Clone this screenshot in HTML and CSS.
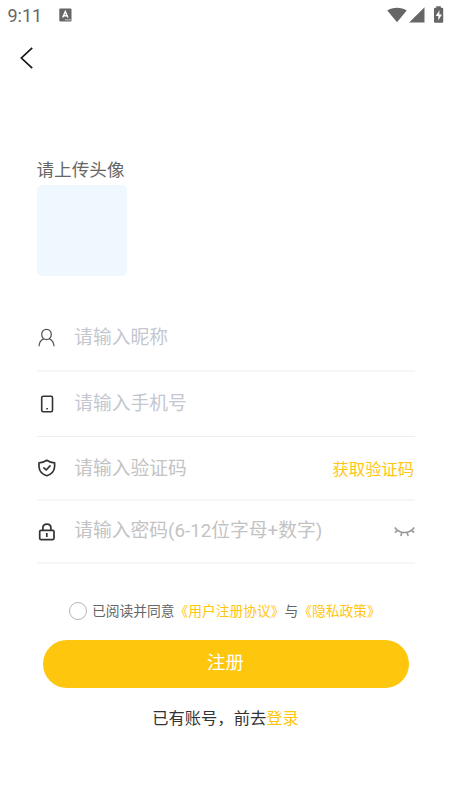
FILE: index.html
```html
<!DOCTYPE html>
<html lang="zh-CN">
<head>
<meta charset="utf-8">
<meta name="viewport" content="width=device-width, initial-scale=1">
<title>注册</title>
<link rel="stylesheet" href="styles.css">
</head>
<body>
<div class="status">
  <span class="time">9:11</span>
  <svg class="ime" width="13" height="14" viewBox="0 0 13 14"><rect x="0.3" y="0.5" width="12.2" height="13" rx="1" fill="#666"/><path d="M3.7 9.5 6.3 3.6 8.9 9.5M4.6 7.7H8" fill="none" stroke="#fff" stroke-width="1.4"/><path d="M6.3 11.8h1.2M8.3 11.8h1.2M10.3 11.8h1.2" stroke="#fff"/></svg>
  <svg class="signals" width="58" height="18" viewBox="0 0 58 18"><g fill="#666"><path d="M.3 4.6C5.5.8 14.500.8 19.700 4.600L10 16.200Z"/><path d="M37.500 1.300V16.500H22.200Z"/><path d="M49.300.3h4.500v1.500h1.400q1 0 1 1v13q0 1-1 1h-7.200q-1 0-1-1v-13q0-1 1-1h1.300z"/></g><path d="M52.500 4.200 48.700 10h2.600v4.500L54.900 8.500H52.300z" fill="#fff"/></svg>
</div>
<header class="nav">
  <svg width="14" height="22" viewBox="0 0 14 22"><path d="M12.200.9 1.400 11 12.200 21.100" fill="none" stroke="#161616" stroke-width="1.700"/></svg>
</header>
<main>
  <div class="upload-label">请上传头像</div>
  <div class="avatar"></div>
  <form class="form">
    <div class="row nickname">
      <svg class="icon" width="20" height="20" viewBox="0 0 20 20"><g fill="none" stroke="#555" stroke-width="1.250"><path d="M9.500 1.300C6.400 1.300 4.700 3.600 4.700 6.400S6.800 11.700 9.500 11.700 14.300 9.200 14.300 6.400 12.600 1.300 9.500 1.300Z"/><path d="M6.700 10.900C4 12 2.200 14.200 2 18.200M12.300 10.900C15 12 16.800 14.200 17 18.200"/></g></svg>
      <span class="hint">请输入昵称</span>
    </div>
    <div class="row phone">
      <svg class="icon" width="20" height="20" viewBox="0 0 20 20"><rect x="4.700" y="2.200" width="10.800" height="15.500" rx="1.500" fill="none" stroke="#333" stroke-width="1.600"/><path d="M9.300 14.700h1.600" stroke="#333" stroke-width="1.500"/></svg>
      <span class="hint">请输入手机号</span>
    </div>
    <div class="row code">
      <svg class="icon" width="20" height="20" viewBox="0 0 20 20"><g fill="none" stroke="#333" stroke-width="1.700" stroke-linejoin="round" stroke-linecap="round"><path d="M9.800 2.300C7.400 4 4.800 4.800 2 4.900V8.700C2.300 13.300 5.300 16.200 9.800 17.700 14.300 16.200 17.300 13.300 17.600 8.700V4.900C14.800 4.800 12.200 4 9.800 2.300Z"/><path d="M6.900 9.800 9.200 12 13 7.900"/></g></svg>
      <span class="hint grey">请输入验证码</span>
      <span class="get-code">获取验证码</span>
    </div>
    <div class="row password">
      <svg class="icon" width="20" height="20" viewBox="0 0 20 20"><g fill="none" stroke="#333" stroke-width="1.700"><rect x="2.700" y="8.300" width="14.300" height="9.300" rx="1.300"/><path d="M5.900 8.300V5.800C5.900 .8 13.900 .8 13.900 5.800V8.300M9.800 11v4"/></g></svg>
      <span class="hint grey">请输入密码(6-12位字母+数字)</span>
      <svg class="eye" width="21" height="12" viewBox="0 0 21 12"><path d="M.8 1.500C5.500 8.200 15.500 8.200 20.200 1.500M3.500 4.200.9 6.600M8 6.300 6.800 10M13 6.300 14.200 10M17.500 4.200 20.100 6.600" fill="none" stroke="#999" stroke-width="1.600"/></svg>
    </div>
  </form>
  <div class="agree"><span class="radio"></span><span class="terms">已阅读并同意<b>《用户注册协议》</b>与<b>《隐私政策》</b></span></div>
  <div class="submit">注册</div>
  <div class="login">已有账号，前去<b>登录</b></div>
</main>
</body>
</html>
```
FILE: styles.css
```css
* { box-sizing: border-box; }
body {
  margin: 0;
  height: 805px;
  overflow: hidden;
  background: #fff;
  font-family: Roboto, "Noto Sans CJK SC", sans-serif;
  color: #333;
}
svg { display: block; flex: none; }
b { font-weight: 400; color: #ffc60e; }
.status {
  display: flex;
  align-items: center;
  height: 32px;
  padding: 0 7px 2px 7.500px;
}
.time { width: 51.500px; font-size: 18px; color: #666; white-space: nowrap; }
.signals { margin-left: auto; }
.nav { height: 52px; padding: 15px 0 0 20px; }
main { padding: 72px 37px 0; }
.upload-label { height: 29px; margin-left: -0.500px; line-height: 29px; font-size: 17.6px; color: #666; }
.avatar { width: 90px; height: 91px; border-radius: 5px; background: #eff7ff; }
.form { margin-top: 29px; }
.row {
  display: flex;
  align-items: center;
  height: 65px;
  border-bottom: 1px solid #eee;
}
.nickname { height: 67px; border-bottom: 2px solid #f6f6f6; }
.phone { height: 65px; }
.code { height: 64px; border-bottom: 2px solid #f6f6f6; }
.password { height: 63px; border-bottom: 2px solid #f6f6f6; }
.hint { margin-left: 17.300px; font-size: 18.75px; line-height: 28px; color: #c4c7d0; white-space: nowrap; }
.nickname .hint { padding-top: 1px; }
.code .hint { padding-top: 1px; }
.password .hint { padding-bottom: 2px; }
.grey { color: #c3c3c3; }
.get-code { margin: 0 1px 0 auto; font-size: 16.3px; color: #ffc60e; white-space: nowrap; }
.eye { margin-left: auto; }
.agree { display: flex; align-items: center; height: 20px; margin: 37px 0 0 32px; }
.radio { flex: none; width: 18px; height: 18px; border: 1px solid #b5b5b5; border-radius: 50%; }
.terms { margin-left: 5px; font-size: 13.75px; line-height: 20px; color: #666; white-space: nowrap; }
.submit {
  height: 48px;
  margin: 19px 6.500px 0 5.500px;
  border-radius: 24px;
  background: #ffc60e;
  color: #fff;
  font-size: 18.5px;
  line-height: 46px;
  text-align: center;
}
.login { margin: 18px 1px 0 0; font-size: 16.3px; line-height: 26px; text-align: center; }
```
